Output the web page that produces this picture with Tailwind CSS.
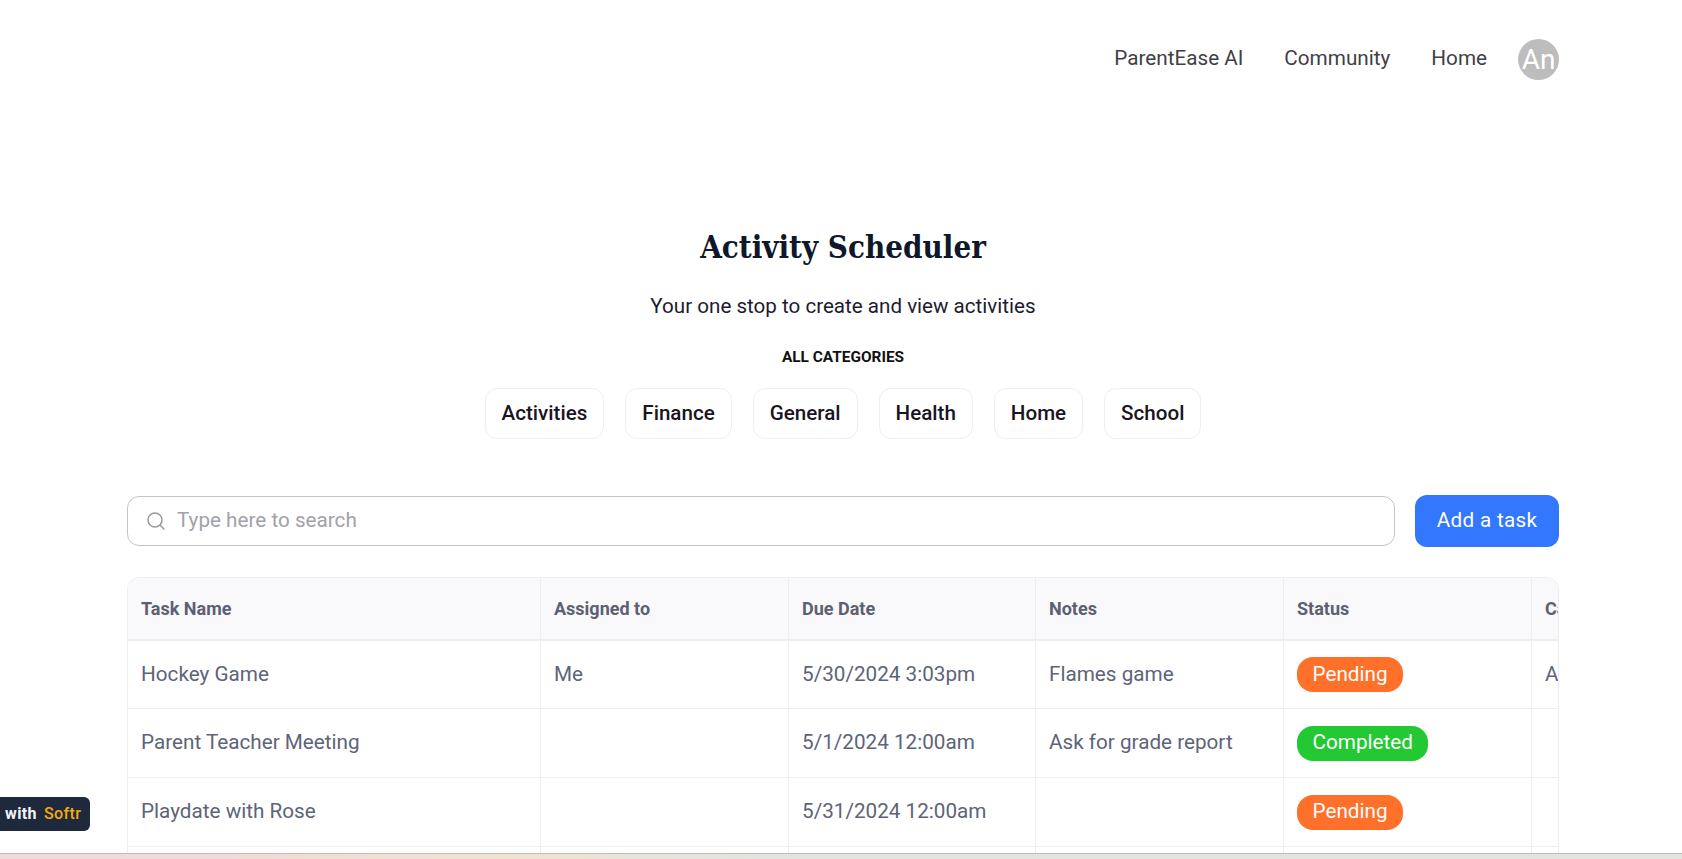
<!DOCTYPE html>
<html>
<head>
<meta charset="utf-8">
<script src="https://cdn.jsdelivr.net/npm/@tailwindcss/browser@4"></script>
</head>
<body class="bg-white overflow-hidden font-['Roboto',sans-serif]">
<div class="relative h-[859px] w-[1682px] overflow-hidden flex flex-col">
  <header class="h-[118px] shrink-0 pr-[123px] flex items-center justify-end gap-[41px] text-[20.7px] text-[#3f3f46]">
    <a>ParentEase AI</a>
    <a>Community</a>
    <div class="flex items-center gap-[31px]">
      <a>Home</a>
      <div class="w-[41px] h-[41px] rounded-full bg-[#bdbdbd] text-white text-[28px] leading-[41px] flex items-center justify-center overflow-hidden">An</div>
    </div>
  </header>
  <section class="ml-[127px] w-[1432px] flex flex-col items-center shrink-0 pt-[109px]">
    <h1 class="font-['DejaVu_Serif',serif] [font-stretch:condensed] font-bold text-[31px] leading-[40px] text-[#0f172a]">Activity Scheduler</h1>
    <p class="mt-[24px] text-[20.6px] leading-[30px] text-[#1e1b2e]">Your one stop to create and view activities</p>
    <p class="mt-[26px] text-[15.4px] leading-[20px] font-bold text-[#111] uppercase">All categories</p>
    <div class="mt-[21px] flex gap-[21px] text-[20.6px] font-medium text-[#1a1423]">
      <span class="h-[51px] px-[16px] flex items-center border border-[#eeeef2] rounded-[12px]">Activities</span>
      <span class="h-[51px] px-[16px] flex items-center border border-[#eeeef2] rounded-[12px]">Finance</span>
      <span class="h-[51px] px-[16px] flex items-center border border-[#eeeef2] rounded-[12px]">General</span>
      <span class="h-[51px] px-[16px] flex items-center border border-[#eeeef2] rounded-[12px]">Health</span>
      <span class="h-[51px] px-[16px] flex items-center border border-[#eeeef2] rounded-[12px]">Home</span>
      <span class="h-[51px] px-[16px] flex items-center border border-[#eeeef2] rounded-[12px]">School</span>
    </div>
  </section>
  <section class="mt-[56px] ml-[127px] w-[1432px] shrink-0 flex items-center gap-[20px]">
    <div class="h-[50px] w-[1268px] border border-[#c4c4c4] rounded-[12px] flex items-center pl-[18px] gap-[11px] text-[20.7px] text-[#a1a1aa]">
      <svg width="20" height="20" viewBox="0 0 20 20" fill="none" stroke="#9a9a9a" stroke-width="1.5" stroke-linecap="round"><circle cx="9" cy="9" r="7"/><path d="M14.2 14.2 18 18"/></svg>
      <span>Type here to search</span>
    </div>
    <button class="h-[52px] w-[144px] bg-[#3377ff] text-white text-[20.7px] tracking-[0.3px] rounded-[12px] flex items-center justify-center">Add a task</button>
  </section>
  <section class="mt-[30px] ml-[127px] w-[1432px] h-[400px] shrink-0 border border-[#eeeef2] rounded-t-[12px] overflow-hidden">
    <div class="w-[1600px]">
      <div class="h-[63px] bg-[#f9f9fb] border-b-2 border-[#eeeef2] grid grid-cols-[413px_248px_247px_248px_248px_196px] text-[18px] font-bold text-[#5d6072]">
        <div class="flex items-center pl-[13px] border-r border-[#eeeef2]">Task Name</div>
        <div class="flex items-center pl-[13px] border-r border-[#eeeef2]">Assigned to</div>
        <div class="flex items-center pl-[13px] border-r border-[#eeeef2]">Due Date</div>
        <div class="flex items-center pl-[13px] border-r border-[#eeeef2]">Notes</div>
        <div class="flex items-center pl-[13px] border-r border-[#eeeef2]">Status</div>
        <div class="flex items-center pl-[13px]">Category</div>
      </div>
      <div class="h-[68px] border-b border-[#eeeef2] grid grid-cols-[413px_248px_247px_248px_248px_196px] text-[20.7px] text-[#5d6478]">
        <div class="flex items-center pl-[13px] border-r border-[#eeeef2]">Hockey Game</div>
        <div class="flex items-center pl-[13px] border-r border-[#eeeef2]">Me</div>
        <div class="flex items-center pl-[13px] border-r border-[#eeeef2]">5/30/2024 3:03pm</div>
        <div class="flex items-center pl-[13px] border-r border-[#eeeef2]">Flames game</div>
        <div class="flex items-center pl-[13px] border-r border-[#eeeef2]"><span class="h-[35px] px-[15.5px] rounded-[16px] bg-[#ff702b] text-white flex items-center">Pending</span></div>
        <div class="flex items-center pl-[13px]">Activities</div>
      </div>
      <div class="h-[69px] border-b border-[#eeeef2] grid grid-cols-[413px_248px_247px_248px_248px_196px] text-[20.7px] text-[#5d6478]">
        <div class="flex items-center pl-[13px] border-r border-[#eeeef2]">Parent Teacher Meeting</div>
        <div class="flex items-center pl-[13px] border-r border-[#eeeef2]"></div>
        <div class="flex items-center pl-[13px] border-r border-[#eeeef2]">5/1/2024 12:00am</div>
        <div class="flex items-center pl-[13px] border-r border-[#eeeef2]">Ask for grade report</div>
        <div class="flex items-center pl-[13px] border-r border-[#eeeef2]"><span class="h-[35px] px-[15.5px] rounded-[16px] bg-[#22c933] text-white flex items-center">Completed</span></div>
        <div class="flex items-center pl-[13px]"></div>
      </div>
      <div class="h-[69px] border-b border-[#eeeef2] grid grid-cols-[413px_248px_247px_248px_248px_196px] text-[20.7px] text-[#5d6478]">
        <div class="flex items-center pl-[13px] border-r border-[#eeeef2]">Playdate with Rose</div>
        <div class="flex items-center pl-[13px] border-r border-[#eeeef2]"></div>
        <div class="flex items-center pl-[13px] border-r border-[#eeeef2]">5/31/2024 12:00am</div>
        <div class="flex items-center pl-[13px] border-r border-[#eeeef2]"></div>
        <div class="flex items-center pl-[13px] border-r border-[#eeeef2]"><span class="h-[35px] px-[15.5px] rounded-[16px] bg-[#ff702b] text-white flex items-center">Pending</span></div>
        <div class="flex items-center pl-[13px]"></div>
      </div>
      <div class="h-[69px] grid grid-cols-[413px_248px_247px_248px_248px_196px]">
        <div class="border-r border-[#eeeef2]"></div>
        <div class="border-r border-[#eeeef2]"></div>
        <div class="border-r border-[#eeeef2]"></div>
        <div class="border-r border-[#eeeef2]"></div>
        <div class="border-r border-[#eeeef2]"></div>
        <div></div>
      </div>
    </div>
  </section>
  <div class="absolute left-0 top-[797px] h-[34px] w-[90px] bg-[#1e293b] rounded-r-[6px] flex items-center pl-[5px] gap-[7px] text-[16px] tracking-[0.4px] font-medium">
    <span class="text-[#f1f5f9] font-bold">with</span><span class="text-[#f5a90f]">Softr</span>
  </div>
  <div class="absolute left-0 right-0 top-[853px] h-[6px] border-t border-[#bdbdb8] bg-gradient-to-r from-[#eedcd9] from-[12%] via-[#efe4d0] via-[30%] to-[#e3e4e0] to-[45%]"></div>
</div>
</body>
</html>
